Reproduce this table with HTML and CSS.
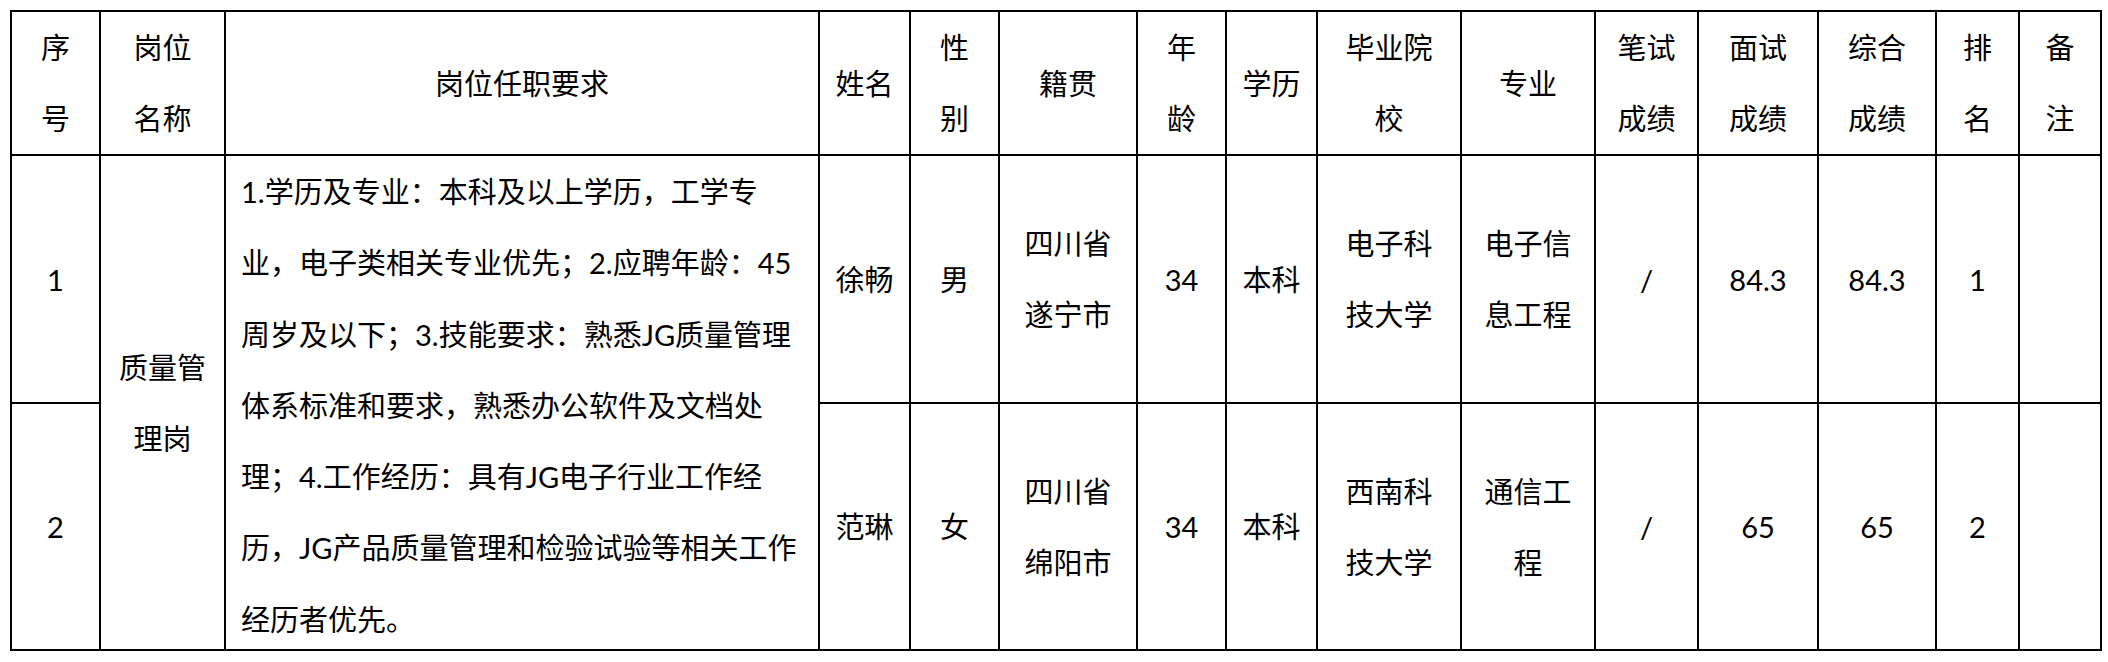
FILE: index.html
```html
<!DOCTYPE html>
<html lang="zh-CN">
<head>
<meta charset="utf-8">
<title>岗位成绩表</title>
<link rel="stylesheet" href="styles.css">
</head>
<body>
<table class="sheet">
  <colgroup>
    <col class="c-no">
    <col class="c-post">
    <col class="c-req">
    <col class="c-name">
    <col class="c-sex">
    <col class="c-home">
    <col class="c-age">
    <col class="c-edu">
    <col class="c-school">
    <col class="c-major">
    <col class="c-written">
    <col class="c-interview">
    <col class="c-total">
    <col class="c-rank">
    <col class="c-note">
  </colgroup>
  <thead>
    <tr class="head-row">
      <th>序<br>号</th>
      <th>岗位<br>名称</th>
      <th>岗位任职要求</th>
      <th>姓名</th>
      <th>性<br>别</th>
      <th>籍贯</th>
      <th>年<br>龄</th>
      <th>学历</th>
      <th>毕业院<br>校</th>
      <th>专业</th>
      <th>笔试<br>成绩</th>
      <th>面试<br>成绩</th>
      <th>综合<br>成绩</th>
      <th>排<br>名</th>
      <th>备<br>注</th>
    </tr>
  </thead>
  <tbody>
    <tr class="row-1">
      <td>1</td>
      <td rowspan="2">质量管<br>理岗</td>
      <td rowspan="2" class="req"><div class="req-text">1.学历及专业：本科及以上学历，工学专<br>业，电子类相关专业优先；2.应聘年龄：45<br>周岁及以下；3.技能要求：熟悉JG质量管理<br>体系标准和要求，熟悉办公软件及文档处<br>理；4.工作经历：具有JG电子行业工作经<br>历，JG产品质量管理和检验试验等相关工作<br>经历者优先。</div></td>
      <td>徐畅</td>
      <td>男</td>
      <td>四川省<br>遂宁市</td>
      <td>34</td>
      <td>本科</td>
      <td>电子科<br>技大学</td>
      <td>电子信<br>息工程</td>
      <td>/</td>
      <td>84.3</td>
      <td>84.3</td>
      <td>1</td>
      <td></td>
    </tr>
    <tr class="row-2">
      <td>2</td>
      <td>范琳</td>
      <td>女</td>
      <td>四川省<br>绵阳市</td>
      <td>34</td>
      <td>本科</td>
      <td>西南科<br>技大学</td>
      <td>通信工<br>程</td>
      <td>/</td>
      <td>65</td>
      <td>65</td>
      <td>2</td>
      <td></td>
    </tr>
  </tbody>
</table>
</body>
</html>
```

FILE: styles.css
```css
html, body {
  margin: 0;
  padding: 0;
  background: #ffffff;
}

body {
  padding: 10px 0 0 10px;
}

.sheet {
  border-collapse: collapse;
  table-layout: fixed;
  width: 2090px;
  font-family: Lato, "Noto Sans CJK SC", sans-serif;
  font-size: 29px;
  color: #000000;
}

.c-no { width: 89px; }
.c-post { width: 125px; }
.c-req { width: 594px; }
.c-name { width: 91px; }
.c-sex { width: 89px; }
.c-home { width: 138px; }
.c-age { width: 89px; }
.c-edu { width: 91px; }
.c-school { width: 144px; }
.c-major { width: 134px; }
.c-written { width: 103px; }
.c-interview { width: 120px; }
.c-total { width: 118px; }
.c-rank { width: 83px; }
.c-note { width: 82px; }

.sheet th,
.sheet td {
  border: 2px solid #000000;
  padding: 0;
  text-align: center;
  vertical-align: middle;
  font-weight: normal;
  line-height: 71px;
  white-space: nowrap;
  overflow: visible;
}

.head-row { height: 143px; }
.row-1 { height: 248px; }
.row-2 { height: 247px; }

.sheet td.req {
  text-align: left;
  vertical-align: top;
  padding-left: 15px;
}

.req-text {
  height: 493px;
  line-height: 71.3px;
  overflow: visible;
}
```
